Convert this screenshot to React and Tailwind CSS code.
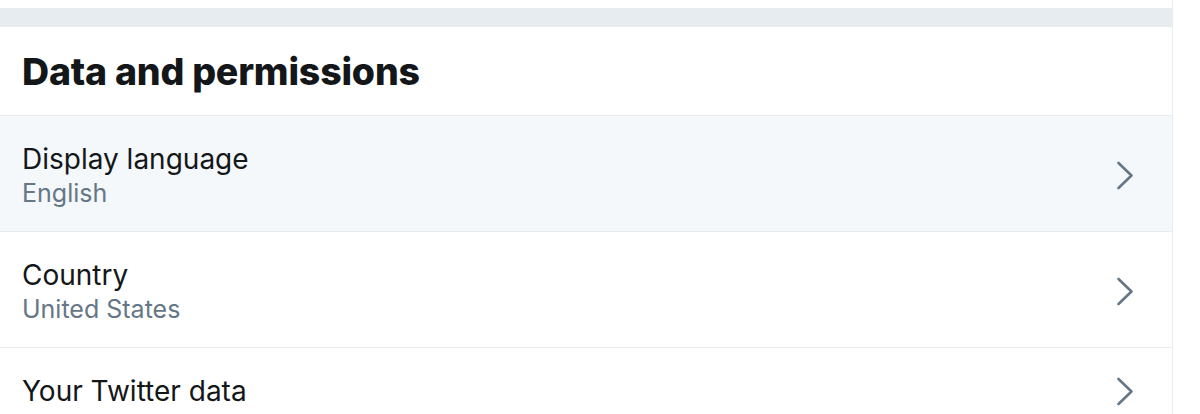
import React from 'react';

const rows = [
  { title: 'Display language', sub: 'English', active: true },
  { title: 'Country', sub: 'United States' },
  { title: 'Your Twitter data' },
];

function Chevron() {
  return (
    <svg width="18" height="29" viewBox="0 0 18 29" fill="none" className="shrink-0">
      <path d="M2.5 2 L15.5 14.5 L2.5 27" stroke="#657786" strokeWidth="2.6" strokeLinecap="round" strokeLinejoin="round" />
    </svg>
  );
}

function Row({ title, sub, active }) {
  return (
    <div
      className={
        'shrink-0 flex items-center justify-between pt-[26px] pb-[22px] pl-[22px] pr-[38px] border-b border-[#e6ecf0] ' +
        (active ? 'bg-[#f5f8fa]' : 'bg-white')
      }
    >
      <div className="flex flex-col">
        <span className="text-[28px] leading-[35px] text-[#14171a]">{title}</span>
        {sub && <span className="text-[25px] leading-[32px] text-[#657786]">{sub}</span>}
      </div>
      <Chevron />
    </div>
  );
}

export default function App() {
  return (
    <div className="w-[1200px] h-[414px] overflow-hidden bg-white flex" style={{ fontFamily: 'Inter, "Liberation Sans", Arial, sans-serif' }}>
      <div className="w-[1173px] border-r border-[#e6ecf0] flex flex-col pt-[8px]">
        <div className="shrink-0 h-[19px] bg-[#e6ecf0]" />
        <div className="shrink-0 h-[89px] flex items-center px-[22px] border-b border-[#e6ecf0]">
          <h2 className="text-[37.5px] font-extrabold text-[#14171a] tracking-[-0.2px] pt-[2px]">Data and permissions</h2>
        </div>
        {rows.map((r) => (
          <Row key={r.title} {...r} />
        ))}
      </div>
    </div>
  );
}
